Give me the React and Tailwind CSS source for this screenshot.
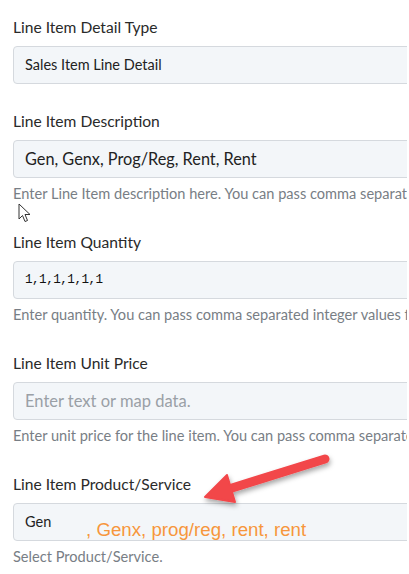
import React from 'react';

const fields = [
  { label: 'Line Item Detail Type', value: 'Sales Item Line Detail', select: true },
  {
    label: 'Line Item Description',
    value: 'Gen, Genx, Prog/Reg, Rent, Rent',
    help: 'Enter Line Item description here. You can pass comma separated values for multiple line items.',
  },
  {
    label: 'Line Item Quantity',
    value: '1,1,1,1,1,1',
    mono: true,
    help: 'Enter quantity. You can pass comma separated integer values for multiple line items.',
  },
  {
    label: 'Line Item Unit Price',
    placeholder: 'Enter text or map data.',
    help: 'Enter unit price for the line item. You can pass comma separated values for multiple line items.',
  },
  {
    label: 'Line Item Product/Service',
    value: 'Gen',
    select: true,
    help: 'Select Product/Service.',
    note: true,
  },
];

const Arrow = () => (
  <svg className="absolute left-[190px] top-[448px] pointer-events-none" width="150" height="70" viewBox="0 0 150 70">
    <defs>
      <filter id="shadow" x="-20%" y="-40%" width="140%" height="180%">
        <feDropShadow dx="1" dy="3" stdDeviation="2.5" floodColor="#000" floodOpacity="0.35" />
      </filter>
    </defs>
    <g filter="url(#shadow)" fill="#f2464a" stroke="#f2464a">
      <line x1="135" y1="11" x2="42" y2="40" strokeWidth="9" strokeLinecap="round" />
      <polygon points="15,49 37,27 45,54" strokeWidth="2" strokeLinejoin="round" />
    </g>
  </svg>
);

const valueClass = (field) => {
  if (field.mono) return "font-['Liberation_Mono',monospace] text-[12.6px] tracking-[-0.5px] text-[#111]";
  if (field.select) return 'text-[14.5px] text-[#222]';
  return 'text-[16.3px] text-[#222]';
};

const Field = ({ field, first }) => (
  <div className={first ? '' : 'mt-[28px]'}>
    <div className="h-[19px] leading-[19px] text-[15.6px] text-[#2a2a2a]">{field.label}</div>
    <div className="relative mt-[9px] h-[38px] w-[420px] rounded-[4px] border border-[#d5d9de] bg-[#f3f6f9] flex items-center pl-[11px]">
      {field.value ? (
        <span className={valueClass(field)}>{field.value}</span>
      ) : (
        <span className="text-[16.5px] text-[#9aa0a6]">{field.placeholder}</span>
      )}
      {field.note && (
        <span className="absolute left-[72px] top-[14px] leading-[24px] font-['Liberation_Sans',sans-serif] text-[18.7px] text-[#f7963c]">
          , Genx, prog/reg, rent, rent
        </span>
      )}
    </div>
    {field.help && (
      <div className="mt-[6px] h-[21px] leading-[20px] whitespace-nowrap text-[14.6px] text-[#787e85]">{field.help}</div>
    )}
  </div>
);

export default function App() {
  return (
    <div className="relative h-[574px] w-[409px] overflow-hidden bg-white font-['Lato',sans-serif]">
      <div className="w-[407px] overflow-hidden pl-[13px] pt-[18px]">
        {fields.map((f, i) => (
          <Field key={f.label} field={f} first={i === 0} />
        ))}
      </div>
      <svg className="absolute left-[18px] top-[203px]" width="14" height="20" viewBox="0 0 14 20">
        <path d="M1 1 L1 16 L4.5 12.5 L7 18.5 L9.5 17.5 L7 11.5 L12 11.5 Z" fill="#fff" stroke="#333" strokeWidth="1" strokeLinejoin="round" />
      </svg>
      <Arrow />
    </div>
  );
}
